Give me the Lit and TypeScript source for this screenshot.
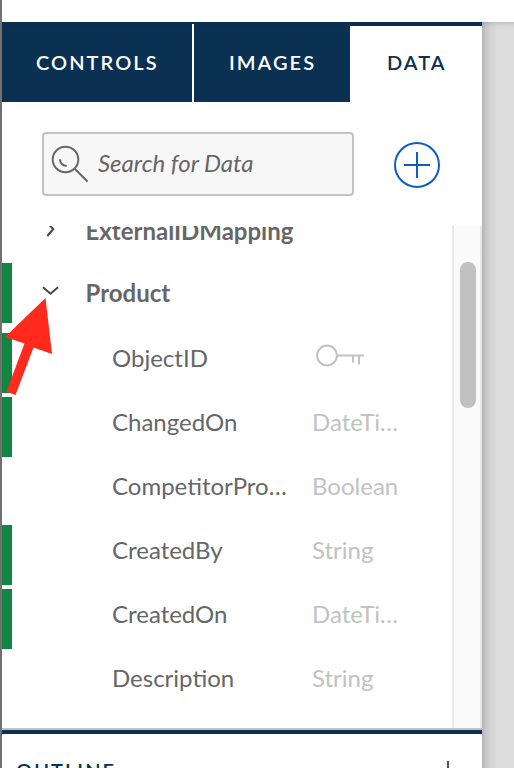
import { LitElement, html, css, svg } from "lit";
import { customElement } from "lit/decorators.js";
import { classMap } from "lit/directives/class-map.js";

interface Field {
  name: string;
  type: string;
  key?: boolean;
  used?: boolean;
}

const FIELDS: Field[] = [
  { name: "ObjectID", type: "", key: true, used: true },
  { name: "ChangedOn", type: "DateTi…", used: true },
  { name: "CompetitorPro…", type: "Boolean" },
  { name: "CreatedBy", type: "String", used: true },
  { name: "CreatedOn", type: "DateTi…", used: true },
  { name: "Description", type: "String" },
];

const strokes = {
  search: svg`<circle cx="17.5" cy="17.5" r="12.8"/><path d="M26.500 26.500 39.500 39.500M12 17.300c.3 3.500 2.500 6.200 6.700 6.700"/>`,
  key: svg`<circle cx="14" cy="11.500" r="9.900"/><path d="M24 11.500H51M40 11.500V18.500M46 11.500V20.500"/>`,
  right: svg`<path d="M1.300 1 7.300 7 1.300 14"/>`,
  down: svg`<path d="M1 1.300 8.500 7.800 16 1.300"/>`,
};

@customElement("data-tabs")
export class DataTabs extends LitElement {
  static styles = css`
    :host { display: flex; height: 80px; flex: none; background: linear-gradient(#0b2f4d 2px, #fff 2px); }
    .tab {
      box-sizing: border-box;
      height: 80px;
      border-top: 4px solid #0b2f4d;
      background: #0a3151;
      color: #fff;
      font-weight: 600;
      font-size: 20px;
      line-height: 72px;
      letter-spacing: 2.050px;
      padding-left: 34px;
      white-space: nowrap;
    }
    .controls { width: 190px; margin-right: 2px; }
    .images { width: 156px; padding-left: 35px; }
    .data { width: 132px; padding-left: 37px; background: #fff; color: #0a3151; }
  `;
  render() {
    return html`
      <div class="tab controls">CONTROLS</div>
      <div class="tab images">IMAGES</div>
      <div class="tab data">DATA</div>
    `;
  }
}

@customElement("field-row")
export class FieldRow extends LitElement {
  static properties = { field: { attribute: false } };
  declare field: Field;
  static styles = css`
    :host { display: block; margin-bottom: 4px; }
    .row {
      display: grid;
      grid-template-columns: 10px 100px 178px 22px 90px;
      height: 60px;
      line-height: 50px;
      font-size: 24px;
      color: #666;
    }
    .used { background: #118643; }
    .name { grid-column: 3; }
    .type { grid-column: 5; color: #c2c2c2; }
    .name, .type { white-space: nowrap; }
    .key {
      display: block;
      width: 54px;
      height: 24px;
      margin: 11px 0 0 1px;
      fill: none;
      stroke: #c2c2c2;
      stroke-width: 2;
    }
  `;
  render() {
    const f = this.field;
    return html`<div class="row">
      <span class=${classMap({ used: !!f.used })}></span>
      <span class="name">${f.name}</span>
      <span class="type">${f.key ? html`<svg class="key" viewBox="0 0 54 24">${strokes.key}</svg>` : f.type}</span>
    </div>`;
  }
}

@customElement("app-root")
export class AppRoot extends LitElement {
  static styles = css`
    :host {
      display: flex;
      flex-direction: column;
      position: relative;
      box-sizing: border-box;
      height: 768px;
      overflow: hidden;
      border-left: 2px solid #707070;
      background: #fff;
      font-family: Lato, sans-serif;
    }
    .top { flex: none; height: 22px; }
    .body { flex: 1; display: flex; min-height: 0; }
    .panel { flex: none; width: 480px; display: flex; flex-direction: column; background: #fff; }
    .canvas {
      flex: 1;
      background:
        linear-gradient(#0000001f, #0000000a 3px, #0000 7px),
        linear-gradient(90deg, #b5b5b5, #c7c7c7 4px, #d5d5d5 9px, #dddddd 15px);
    }
    .tools {
      box-sizing: border-box;
      flex: none;
      display: flex;
      align-items: flex-start;
      height: 124px;
      padding: 30px 0 0 40px;
    }
    .search {
      box-sizing: border-box;
      display: flex;
      width: 312px;
      height: 64px;
      border: 2px solid #c2c2c2;
      border-radius: 4px;
      background: #f7f7f7;
      color: #666;
      font-size: 24px;
      font-style: italic;
      line-height: 57px;
    }
    .glass { width: 42px; height: 42px; margin: 8px 8px 0 4px; fill: none; stroke: #666; stroke-width: 2; }
    .add { width: 46px; height: 46px; margin: 10px 0 0 40px; fill: none; stroke: #0f5dc4; stroke-width: 2; }
    .list { flex: none; display: flex; height: 502px; overflow: hidden; border-bottom: 2px solid #c2c2c2; }
    .tree { width: 450px; margin-top: -25px; }
    .group {
      display: grid;
      grid-template-columns: 10px 28px 45.500px 1fr;
      height: 60px;
      margin-bottom: 2px;
      line-height: 59px;
      font-size: 24px;
      font-weight: 700;
      color: #666;
    }
    .open { margin-bottom: 10px; }
    .used { background: #118643; }
    .label { grid-column: 4; }
    .caret { grid-column: 3; align-self: center; fill: none; stroke: #464646; stroke-width: 2; }
    .side { width: 9px; height: 15px; margin: 0 0 3px 6px; }
    .down { width: 17px; height: 10px; margin: 0 0 4px 1.500px; }
    .scroll {
      box-sizing: border-box;
      width: 30px;
      padding: 36px 0 0 6px;
      border: solid #e8e8e8;
      border-width: 0 2px;
      background: #fafafa;
    }
    .thumb { width: 16px; height: 146px; border-radius: 8px; background: #c1c1c1; }
    .outline {
      flex: 1;
      display: flex;
      overflow: hidden;
      border-top: 4px solid #0a3151;
      padding: 23px 26px 0 14px;
      justify-content: space-between;
      color: #0a3151;
      font-weight: 600;
      font-size: 20px;
      letter-spacing: 2.050px;
      line-height: 26px;
    }
    .expand { width: 16px; height: 16px; margin-top: 4px; stroke: #555; stroke-width: 2; }
    .pointer { position: absolute; left: 3px; top: 298px; width: 50px; height: 98px; fill: #ff2a1c; }
  `;
  render() {
    return html`
      <div class="top"></div>
      <div class="body">
        <div class="panel">
          <data-tabs></data-tabs>
          <div class="tools">
            <div class="search">
              <svg class="glass" viewBox="0 0 42 42">${strokes.search}</svg>
              <span>Search for Data</span>
            </div>
            <svg class="add" viewBox="0 0 46 46">
              <circle cx="23" cy="23" r="22" /><path d="M10 23H36M23 10V36" />
            </svg>
          </div>
          <div class="list">
            <div class="tree">
              <div class="group">
                <svg class="caret side" viewBox="0 0 9 15">${strokes.right}</svg>
                <span class="label">ExternalIDMapping</span>
              </div>
              <div class="group open">
                <span class="used"></span>
                <svg class="caret down" viewBox="0 0 17 10">${strokes.down}</svg>
                <span class="label">Product</span>
              </div>
              ${FIELDS.map((f) => html`<field-row .field=${f}></field-row>`)}
            </div>
            <div class="scroll"><div class="thumb"></div></div>
          </div>
          <div class="outline">
            <span>OUTLINE</span>
            <svg class="expand" viewBox="0 0 16 16"><path d="M8 0V16M0 8H16" /></svg>
          </div>
        </div>
        <div class="canvas"></div>
      </div>
      <svg class="pointer" viewBox="5 298 50 98">
        <path d="M45.500 298 52 354 33.500 347.500 15.500 395 6.500 391.500 24.500 343.500 5 337Z" />
      </svg>
    `;
  }
}
